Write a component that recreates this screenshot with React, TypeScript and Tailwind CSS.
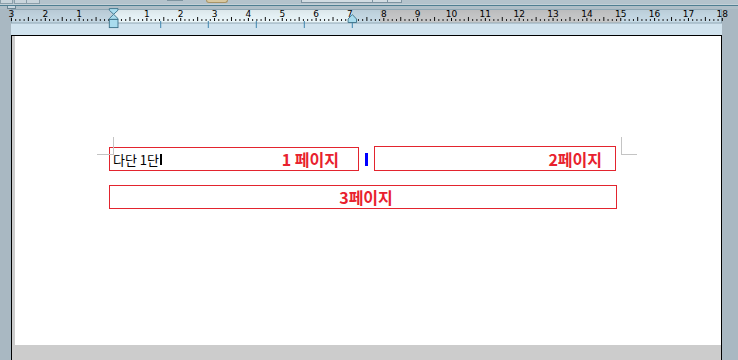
import React from "react";

const CM = 33.85;
const ORIGIN = 102; // local x of 0 cm inside ruler svg

function Ruler() {
  const ticks: React.ReactNode[] = [];
  for (let k = -24; k <= 18 * 8; k++) {
    const x = ORIGIN + (k * CM) / 8;
    if (x < 0 || x > 716) continue;
    if (k % 8 === 0) {
      const c = Math.abs(k / 8);
      if (k !== 0) {
        ticks.push(
          <text
            key={"t" + k}
            x={x}
            y={7.6}
            textAnchor="middle"
            fontSize="9"
            fontFamily="'DejaVu Sans', sans-serif"
            fill="#000"
          >
            {c}
          </text>
        );
      }
      ticks.push(<rect key={"c" + k} x={x - 0.5} y={9} width={1} height={3} fill="#000" />);
    } else if (k % 4 === 0) {
      ticks.push(<rect key={"h" + k} x={x - 0.5} y={8} width={1} height={4} fill="#111" />);
    } else {
      ticks.push(<rect key={"s" + k} x={x - 0.5} y={10} width={1} height={2} fill="#222" />);
    }
  }
  const tabs = [149.7, 197.3, 245.3, 293.3];
  return (
    <svg width={711} height={26} className="block ml-[11px]" style={{ overflow: "visible" }}>
      <defs>
        <linearGradient id="shade" x1="0" y1="0" x2="0" y2="1">
          <stop offset="0" stopColor="#000" stopOpacity="0.07" />
          <stop offset="0.45" stopColor="#000" stopOpacity="0.03" />
          <stop offset="1" stopColor="#000" stopOpacity="0" />
        </linearGradient>
      </defs>
      <rect x={0} y={14} width={711} height={12} fill="#d1e3ee" />
      <rect x={0} y={0} width={102} height={14} fill="#c4d7e3" />
      <rect x={102} y={0} width={239} height={14} fill="#eaf6fa" />
      <rect x={341} y={0} width={28} height={14} fill="#c7dbe7" />
      <rect x={369} y={0} width={241} height={14} fill="#c8c9ca" />
      <rect x={610} y={0} width={101} height={14} fill="#c7dbe7" />
      <rect x={0} y={0} width={711} height={14} fill="url(#shade)" />
      <rect x={0.5} y={0.5} width={710} height={13.5} fill="none" stroke="#8fa6b3" strokeWidth={1} />
      {ticks}
      {tabs.map((t) => (
        <rect key={t} x={t - 0.5} y={12} width={1} height={7} fill="#3f86b0" />
      ))}
      <rect x={340.8} y={12} width={1} height={7} fill="#3f86b0" />
      <path d="M341.3,5.5 L345.5,10 V13.5 H337.1 V10 Z" fill="#a9dcee" stroke="#3b7088" strokeWidth={0.9} />
      <path d="M98.3,-0.4 H107 V1.2 L102.65,5.3 L98.3,1.2 Z" fill="#a9dcee" stroke="#3b7088" strokeWidth={0.9} />
      <path d="M102.65,5.3 L107,9.6 V10.4 H98.3 V9.6 Z" fill="#a9dcee" stroke="#3b7088" strokeWidth={0.9} />
      <rect x={98.3} y={10.4} width={8.7} height={8.2} fill="#a9dcee" stroke="#3b7088" strokeWidth={0.9} />
    </svg>
  );
}

export default function App() {
  const red = "text-[#e8212e]";
  return (
    <div
      className="w-[738px] h-[360px] overflow-hidden bg-[#a9b8c2] flex flex-col"
      style={{ fontFamily: "'Noto Sans CJK KR', 'Noto Sans', sans-serif" }}
    >
      <div className="h-[9px] bg-[#afbec7] flex flex-col shrink-0">
        <div className="h-[4px] flex items-start bg-[#b4c3cc]">
          <div className="w-[13px] h-[4px] bg-[#c9d5dc] border border-t-0 border-[#8a9ea9]" />
          <div className="ml-[1px] w-[13px] h-[4px] bg-[#c9d5dc] border border-t-0 border-[#8a9ea9]" />
          <div className="w-[13px] h-[4px] bg-[#c9d5dc] border border-t-0 border-l-0 border-[#8a9ea9]" />
          <div className="ml-[127px] w-[16px] h-[1px] bg-[#7f95a1]" />
          <div className="ml-[23px] w-[22px] h-[3px] bg-[#d8c8a0] border border-t-0 border-[#a89468] rounded-b-[3px]" />
          <div className="ml-[73px] w-[101px] h-[3px] bg-[#d2dce2] border border-t-0 border-[#7e93a0] flex">
            <div className="ml-[70px] w-[1px] h-full bg-[#7e93a0]" />
            <div className="ml-[14px] w-[1px] h-full bg-[#7e93a0]" />
          </div>
        </div>
        <div className="h-[1px] bg-[#c4d0d7]" />
        <div className="h-[1px] bg-[#4f7f92]" />
        <div className="flex items-start">
          <div className="ml-[7px] w-[9px] h-[3px] bg-[#c9d7df] border border-t-0 border-[#6d8593]" />
        </div>
      </div>

      <Ruler />

      <div className="ml-[11px] w-[711px] flex-1 border-l border-t border-r border-black bg-[#cccccc] pl-[3px]">
        <div className="relative w-[706px] h-[309px] bg-white pl-[94px] pt-[110px]">
          <div className="absolute left-[98px] top-[101px] w-[1px] h-[17px] bg-[#c4c4c4]" />
          <div className="absolute left-[82px] top-[118px] w-[17px] h-[1px] bg-[#c4c4c4]" />
          <div className="absolute left-[606px] top-[101px] w-[1px] h-[17px] bg-[#c4c4c4]" />
          <div className="absolute left-[606px] top-[118px] w-[16px] h-[1px] bg-[#c4c4c4]" />

          <div className="flex items-start">
            <div className="mt-[1px] w-[250px] h-[24px] border border-[#e3242e] flex items-center pl-[3px] pr-[19px]">
              <span className="text-[13px] leading-none text-black">다단 1단</span>
              <span className="inline-block w-[2px] h-[11px] bg-black ml-[1px]" />
              <span className={`ml-auto text-[16px] font-bold leading-none ${red}`}>1 페이지</span>
            </div>
            <div className="ml-[6px] mt-[7px] w-[3px] h-[13px] bg-[#0000ff]" />
            <div className="ml-[6px] w-[242px] h-[25px] border border-[#e3242e] flex items-center justify-end pr-[13px]">
              <span className={`text-[16px] font-bold leading-none ${red}`}>2페이지</span>
            </div>
          </div>
          <div className="mt-[14px] w-[508px] h-[24px] border border-[#e3242e] flex items-center justify-center pl-[6px]">
            <span className={`text-[16px] font-bold leading-none ${red}`}>3페이지</span>
          </div>
        </div>
      </div>
    </div>
  );
}
